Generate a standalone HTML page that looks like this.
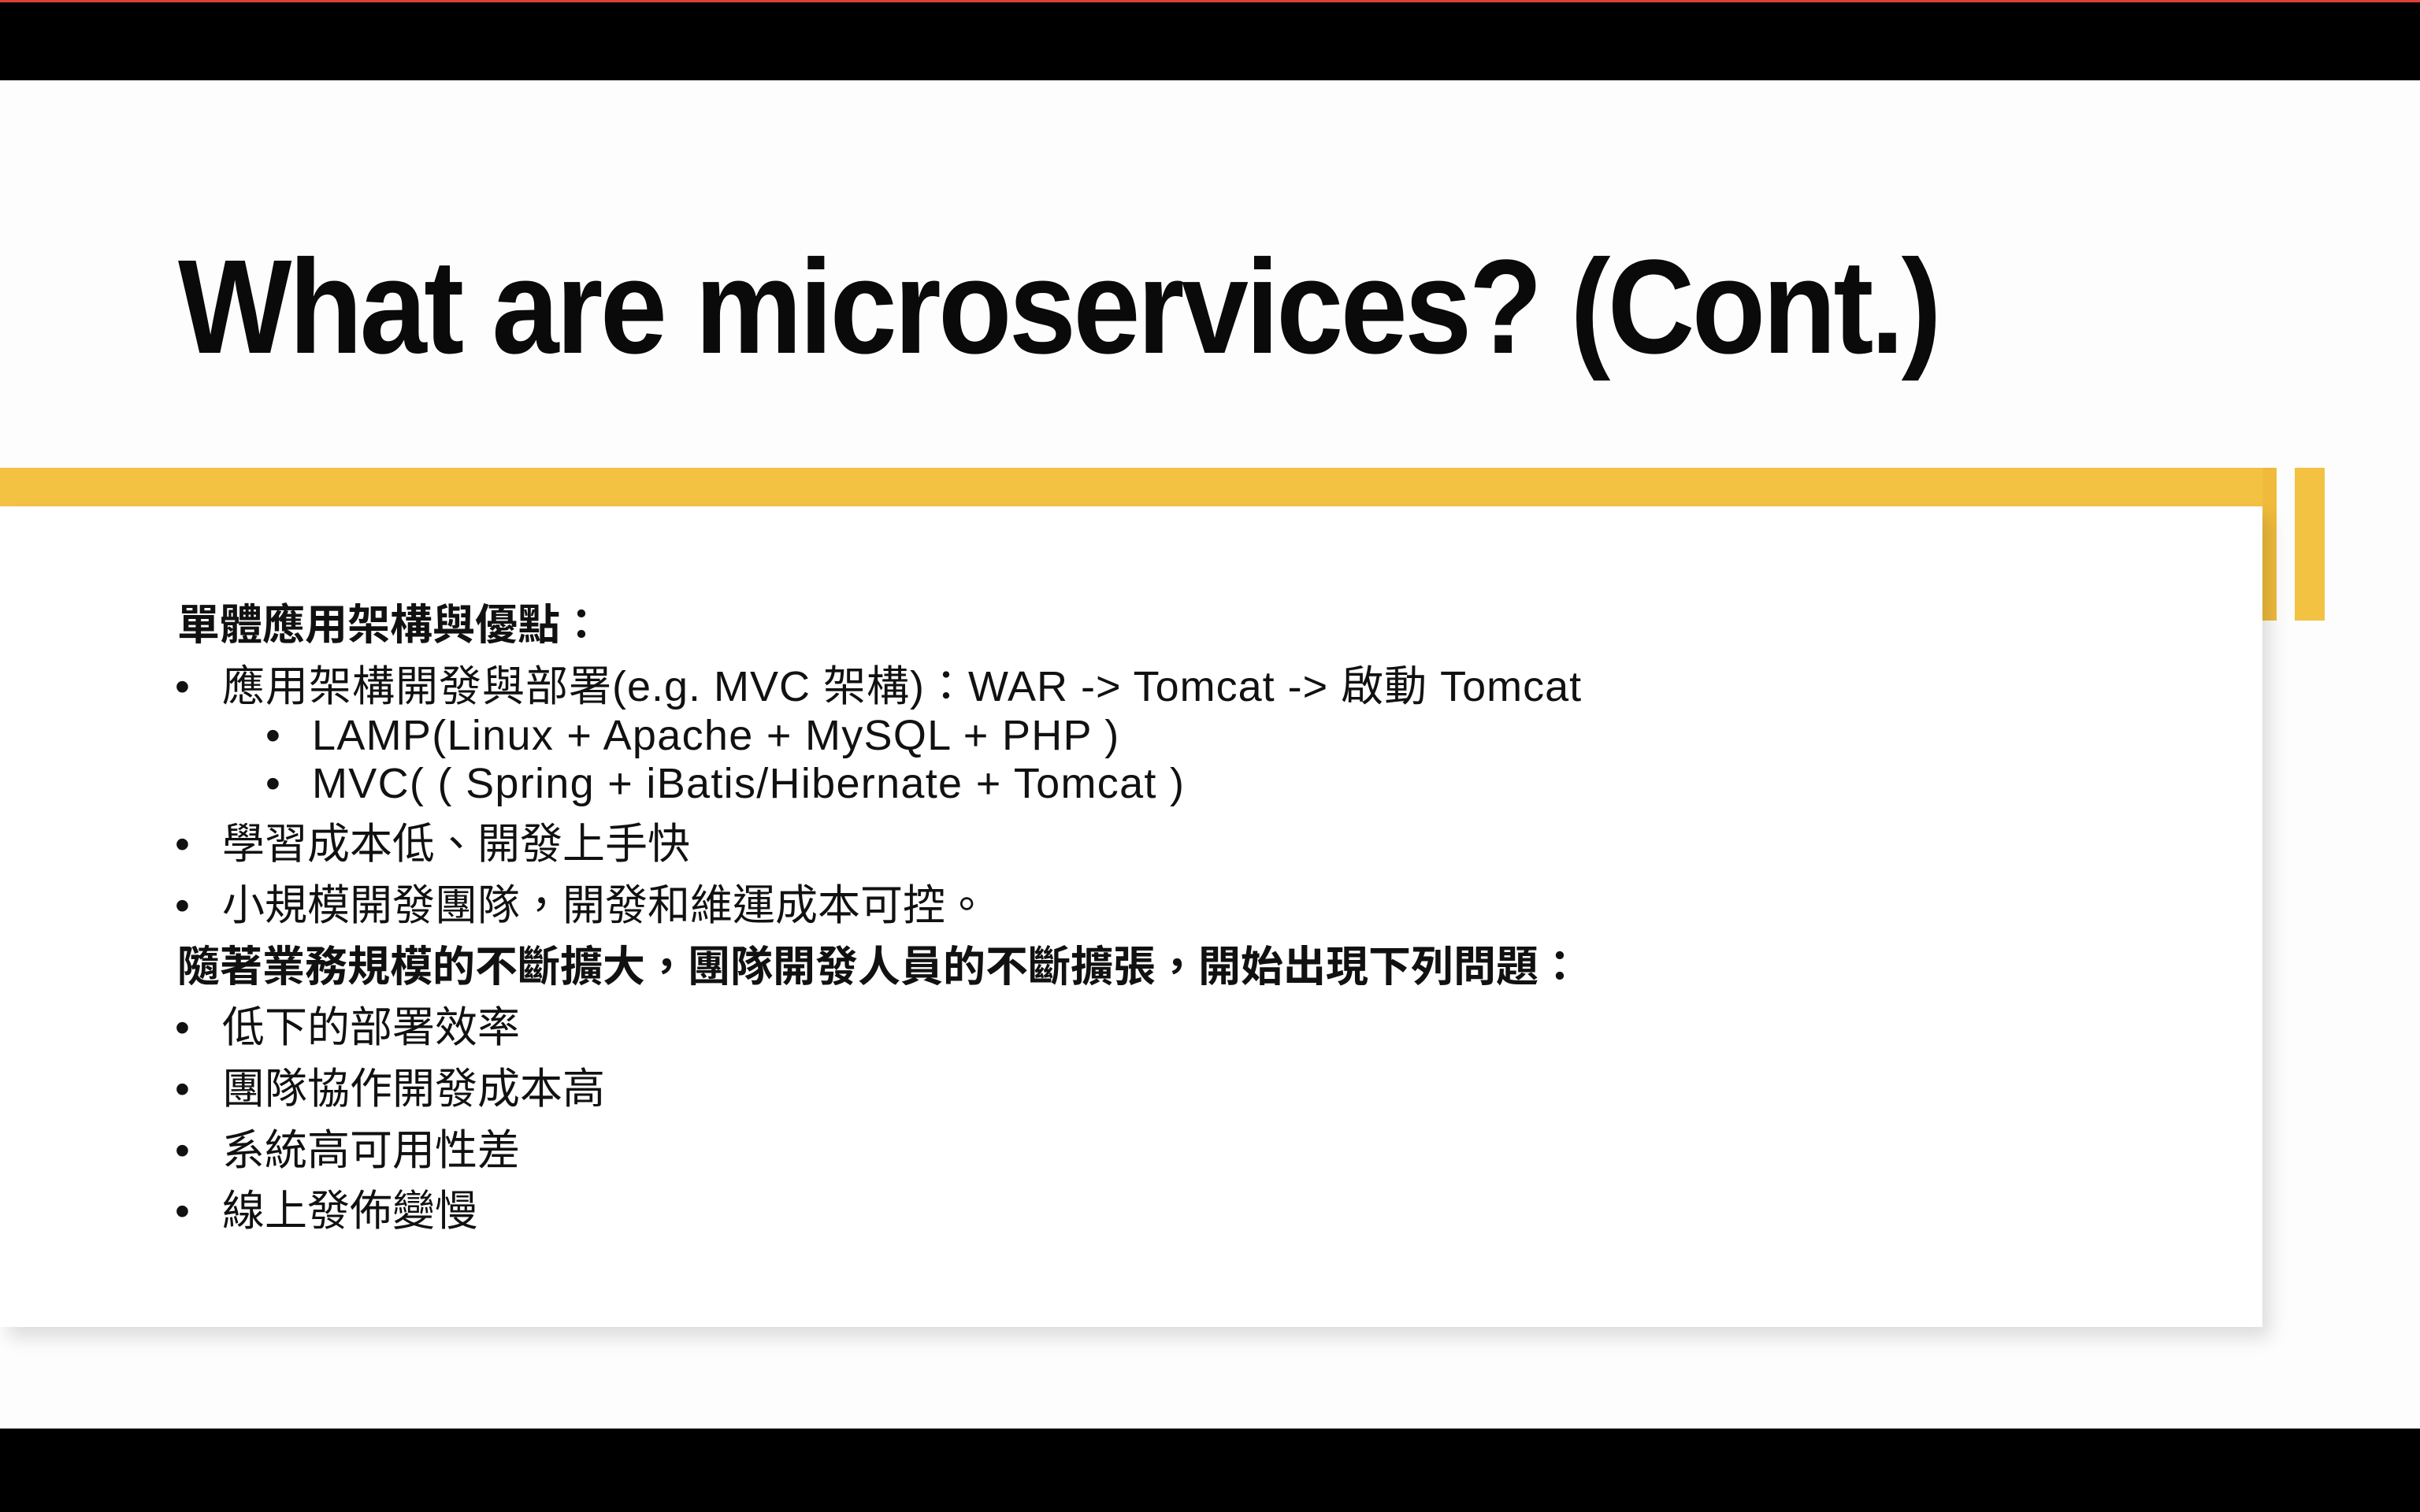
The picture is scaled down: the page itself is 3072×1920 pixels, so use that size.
<!DOCTYPE html>
<html><head><meta charset="utf-8"><style>
html,body{margin:0;padding:0;width:3072px;height:1920px;overflow:hidden;background:#fdfdfd;position:relative;font-family:"Liberation Sans","Noto Sans CJK TC",sans-serif;color:#111}
.abs{position:absolute}
.l{position:absolute;white-space:nowrap;font-size:54px;line-height:60px;transform:translateY(-30px)}
.b{font-weight:bold}
.la{letter-spacing:1.3px}
</style></head><body>
<div class="abs" style="left:0;top:0;width:3072px;height:102px;background:#000"></div>
<div class="abs" style="left:0;top:0;width:3072px;height:3px;background:#e0403a"></div>
<div class="abs" style="left:0;top:1814px;width:3072px;height:106px;background:#000"></div>
<div class="abs" style="left:226px;top:290px;font-size:170px;font-weight:bold;line-height:200px;white-space:nowrap;letter-spacing:-4px;color:#0a0a0a;transform:scaleX(0.9);transform-origin:0 0">What are microservices? (Cont.)</div>
<div class="abs" style="left:0;top:594px;width:2890px;height:49px;background:#f3c243"></div>
<div class="abs" style="left:2872px;top:594px;width:18px;height:194px;background:#f0bb3c"></div>
<div class="abs" style="left:2913px;top:594px;width:38px;height:194px;background:#f3c243"></div>
<div class="abs" style="left:0;top:643px;width:2872px;height:1042px;background:#fff;box-shadow:10px 14px 22px rgba(0,0,0,0.13)"></div>
<div class="l b" style="left:225px;top:794px">單體應用架構與優點：</div>
<div class="l" style="left:222px;top:872px">•</div><div class="l" style="left:282px;top:872px;letter-spacing:1px">應用架構開發與部署(e.g. MVC 架構)：WAR -&gt; Tomcat -&gt; 啟動 Tomcat</div>
<div class="l" style="left:337px;top:934px">•</div><div class="l la" style="left:396px;top:934px">LAMP(Linux + Apache + MySQL + PHP )</div>
<div class="l" style="left:337px;top:995px">•</div><div class="l la" style="left:396px;top:995px">MVC( ( Spring + iBatis/Hibernate + Tomcat )</div>
<div class="l" style="left:222px;top:1072px">•</div><div class="l" style="left:282px;top:1072px">學習成本低、開發上手快</div>
<div class="l" style="left:222px;top:1150px">•</div><div class="l" style="left:282px;top:1150px">小規模開發團隊，開發和維運成本可控。</div>
<div class="l b" style="left:225px;top:1228px">隨著業務規模的不斷擴大，團隊開發人員的不斷擴張，開始出現下列問題：</div>
<div class="l" style="left:222px;top:1305px">•</div><div class="l" style="left:282px;top:1305px">低下的部署效率</div>
<div class="l" style="left:222px;top:1383px">•</div><div class="l" style="left:282px;top:1383px">團隊協作開發成本高</div>
<div class="l" style="left:222px;top:1461px">•</div><div class="l" style="left:282px;top:1461px">系統高可用性差</div>
<div class="l" style="left:222px;top:1538px">•</div><div class="l" style="left:282px;top:1538px">線上發佈變慢</div>
</body></html>
